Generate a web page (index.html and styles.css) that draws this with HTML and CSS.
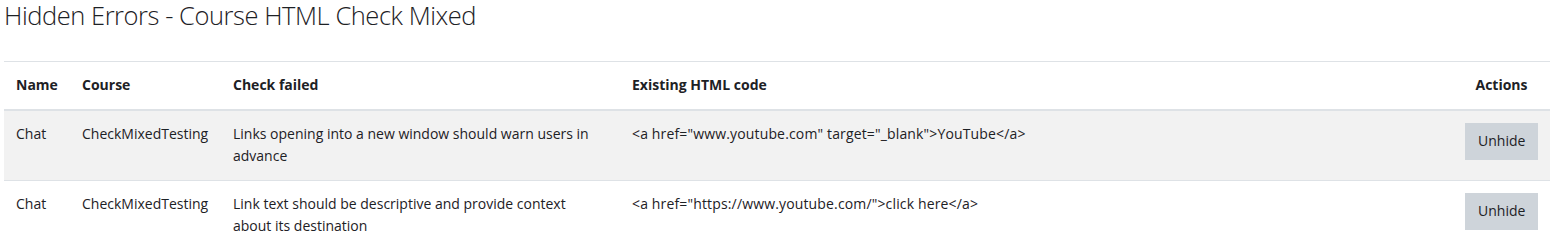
FILE: index.html
```html
<!DOCTYPE html>
<html lang="en">
<head>
<meta charset="utf-8">
<title>Hidden Errors - Course HTML Check Mixed</title>
<link rel="stylesheet" href="styles.css">
</head>
<body>
<div class="page">
  <h2 class="page-title">Hidden Errors - Course HTML Check Mixed</h2>
  <table class="errors">
    <colgroup>
      <col class="c-name">
      <col class="c-course">
      <col class="c-check">
      <col class="c-code">
      <col class="c-actions">
    </colgroup>
    <thead>
      <tr>
        <th>Name</th>
        <th>Course</th>
        <th>Check failed</th>
        <th>Existing HTML code</th>
        <th class="center">Actions</th>
      </tr>
    </thead>
    <tbody>
      <tr class="odd">
        <td>Chat</td>
        <td>CheckMixedTesting</td>
        <td class="check">Links opening into a new window should warn users in advance</td>
        <td class="code">&lt;a href="www.youtube.com" target="_blank"&gt;YouTube&lt;/a&gt;</td>
        <td class="center"><button class="btn">Unhide</button></td>
      </tr>
      <tr>
        <td>Chat</td>
        <td>CheckMixedTesting</td>
        <td class="check">Link text should be descriptive and provide context about its destination</td>
        <td class="code">&lt;a href="https://www.youtube.com/"&gt;click here&lt;/a&gt;</td>
        <td class="center"><button class="btn">Unhide</button></td>
      </tr>
    </tbody>
  </table>
</div>
</body>
</html>
```

FILE: styles.css
```css
html, body {
  margin: 0;
  padding: 0;
  background: #ffffff;
}

body {
  font-family: "Segoe UI", "Open Sans", sans-serif;
  font-size: 14px;
  line-height: 22.5px;
  color: #1d2125;
}

.page {
  padding: 0 2px 0 4px;
}

.page-title {
  font-size: 25.5px;
  font-weight: 300;
  letter-spacing: -0.45px;
  line-height: 30px;
  margin: 0 0 31px 0;
  padding: 0;
}

.errors {
  width: 100%;
  border-collapse: collapse;
  table-layout: fixed;
  border-top: 1px solid #dee2e6;
}

.c-name { width: 66px; }
.c-course { width: 151px; }
.c-check { width: 399px; }
.c-code { width: auto; }
.c-actions { width: 97px; }

.errors th,
.errors td {
  padding: 12px;
  text-align: left;
  vertical-align: top;
}

.errors td.check {
  padding-right: 26px;
}

.errors td.code {
  letter-spacing: 0.15px;
}

.errors th {
  font-weight: 700;
  border-bottom: 2px solid #dee2e6;
}

.errors td {
  border-top: 1px solid #dee2e6;
}

.errors tbody tr:first-child td {
  border-top: 0;
}

.errors tr.odd td {
  background: #f2f2f2;
}

.errors .center {
  text-align: center;
}

.btn {
  font-family: inherit;
  font-size: 14px;
  line-height: 22.5px;
  color: #1d2125;
  background: #ced4da;
  border: 1px solid #ced4da;
  border-radius: 0;
  padding: 6px 12px;
  width: 73px;
  height: 37px;
  margin: 0;
  cursor: pointer;
}
```
